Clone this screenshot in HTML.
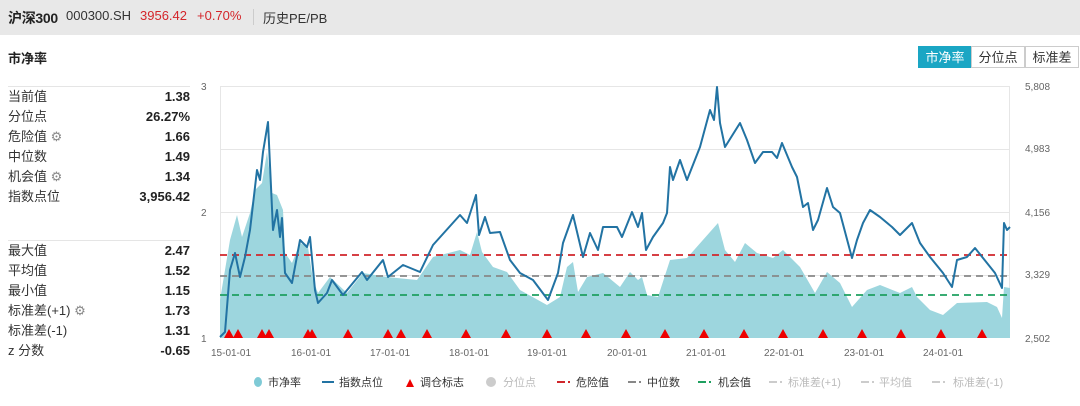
<!DOCTYPE html>
<html><head><meta charset="utf-8"><style>
body{margin:0;width:1080px;height:406px;background:#fff;font-family:"Liberation Sans","Noto Sans CJK SC",sans-serif;overflow:hidden;position:relative}
.hdr{position:absolute;left:0;top:0;width:1080px;height:35px;background:#e8e8e8}
.t{position:absolute;white-space:nowrap}
.row{position:absolute;left:8px;width:182px;height:20px;font-size:13px;color:#333;line-height:20px}
.row b{position:absolute;right:0;top:0;font-weight:bold;color:#222}
.sep{position:absolute;left:8px;width:182px;height:1px;background:#e5e5e5}
.btn{position:absolute;top:46px;height:22px;line-height:22px;font-size:13px;text-align:center;border:1px solid #ccc;box-sizing:border-box;color:#333;background:#fff}
</style></head><body>
<div class="hdr"></div>
<div class="t" style="left:8px;top:8px;font-size:14px;font-weight:bold;color:#222;letter-spacing:-0.3px">沪深300</div>
<div class="t" style="left:66px;top:8px;font-size:13px;color:#333">000300.SH</div>
<div class="t" style="left:140px;top:8px;font-size:13px;color:#d4262b">3956.42</div>
<div class="t" style="left:197px;top:8px;font-size:13px;color:#d4262b">+0.70%</div>
<div style="position:absolute;left:253px;top:9px;width:1px;height:16px;background:#ccc"></div>
<div class="t" style="left:263px;top:8px;font-size:13px;color:#333">历史PE/PB</div>
<div class="t" style="left:8px;top:48px;font-size:13px;font-weight:bold;color:#222">市净率</div>
<div class="btn" style="left:918px;width:54px;background:#1aa6c4;border-color:#1aa6c4;color:#fff">市净率</div>
<div class="btn" style="left:971px;width:54px">分位点</div>
<div class="btn" style="left:1025px;width:54px">标准差</div>

<div class="sep" style="top:86px"></div>
<div class="row" style="top:87px">当前值<b>1.38</b></div>
<div class="row" style="top:107px">分位点<b>26.27%</b></div>
<div class="row" style="top:127px">危险值 <span style="color:#888">⚙</span><b>1.66</b></div>
<div class="row" style="top:147px">中位数<b>1.49</b></div>
<div class="row" style="top:167px">机会值 <span style="color:#888">⚙</span><b>1.34</b></div>
<div class="row" style="top:187px">指数点位<b>3,956.42</b></div>
<div class="sep" style="top:240px"></div>
<div class="row" style="top:241px">最大值<b>2.47</b></div>
<div class="row" style="top:261px">平均值<b>1.52</b></div>
<div class="row" style="top:281px">最小值<b>1.15</b></div>
<div class="row" style="top:301px">标准差(+1) <span style="color:#888">⚙</span><b>1.73</b></div>
<div class="row" style="top:321px">标准差(-1)<b>1.31</b></div>
<div class="row" style="top:341px">z 分数<b>-0.65</b></div>

<svg width="1080" height="406" style="position:absolute;left:0;top:0" font-family="Liberation Sans,Noto Sans CJK SC,sans-serif">
<g stroke="#e6e6e6" stroke-width="1">
<line x1="220" y1="86.5" x2="1010" y2="86.5"/><line x1="220" y1="149.5" x2="1010" y2="149.5"/>
<line x1="220" y1="212.5" x2="1010" y2="212.5"/><line x1="220" y1="275.5" x2="1010" y2="275.5"/>
<line x1="220.5" y1="86" x2="220.5" y2="338"/><line x1="1009.5" y1="86" x2="1009.5" y2="338"/>
</g>
<g font-size="10" fill="#666">
<text x="201" y="90">3</text><text x="201" y="216">2</text><text x="201" y="342">1</text>
<text x="1025" y="90">5,808</text><text x="1025" y="152">4,983</text><text x="1025" y="216">4,156</text><text x="1025" y="278">3,329</text><text x="1025" y="342">2,502</text>
</g>
<polygon fill="#9dd6de" points="220,338 220,300 230,240 237,215 242,237 250,213 255,190 262,183 267,152 272,193 277,195 283,210 285,253 292,263 300,243 308,247 313,280 318,293 330,277 347,293 363,273 387,277 417,280 433,257 460,250 470,255 477,232 482,252 493,267 507,272 520,290 547,305 560,297 567,267 573,262 578,292 587,277 603,273 620,287 630,272 638,280 642,277 647,295 658,297 670,260 687,258 710,232 718,223 725,250 735,262 745,243 757,253 773,258 783,250 800,267 815,293 827,272 840,283 852,307 867,290 880,285 900,293 912,287 917,297 930,310 943,315 957,303 987,302 997,307 1002,318 1004,287 1010,288 1010,338"/>
<g stroke-width="1.8" stroke-dasharray="7,5" fill="none">
<line x1="220" y1="255" x2="1010" y2="255" stroke="#d0262b"/>
<line x1="220" y1="276" x2="1010" y2="276" stroke="#888"/>
<line x1="220" y1="295" x2="1010" y2="295" stroke="#1fa060"/>
</g>
<polyline fill="none" stroke="#2273a3" stroke-width="2" stroke-linejoin="round" points="220,337 225,332 230,270 235,253 240,277 245,257 250,230 257,170 260,180 263,152 268,122 273,230 277,210 280,237 282,218 285,273 292,283 300,240 307,247 310,237 315,290 318,303 327,293 332,280 343,295 362,272 367,280 383,260 388,277 403,265 420,272 433,245 460,215 467,223 476,195 479,235 485,217 490,233 500,232 510,260 520,273 533,280 548,300 558,273 563,243 573,215 583,257 590,233 598,250 603,227 617,227 622,237 632,212 638,227 642,213 646,250 653,237 663,223 667,213 670,167 673,180 680,160 687,180 700,147 710,110 714,120 717,87 720,123 725,147 740,123 747,140 755,163 763,152 772,152 777,158 782,143 792,167 797,177 803,207 808,203 813,230 818,220 827,188 833,207 840,213 852,258 857,240 863,223 870,210 880,217 892,227 900,235 912,223 920,243 930,257 943,273 952,287 957,260 967,257 975,248 987,263 995,273 1002,288 1004,223 1007,230 1010,227"/>
<g fill="#ee0000">
<path d="M224,338l5,-9l5,9z M233,338l5,-9l5,9z M257,338l5,-9l5,9z M264,338l5,-9l5,9z M303,338l5,-9l5,9z M307,338l5,-9l5,9z M343,338l5,-9l5,9z M383,338l5,-9l5,9z M396,338l5,-9l5,9z M422,338l5,-9l5,9z M461,338l5,-9l5,9z M501,338l5,-9l5,9z M542,338l5,-9l5,9z M581,338l5,-9l5,9z M621,338l5,-9l5,9z M660,338l5,-9l5,9z M699,338l5,-9l5,9z M739,338l5,-9l5,9z M778,338l5,-9l5,9z M818,338l5,-9l5,9z M857,338l5,-9l5,9z M896,338l5,-9l5,9z M936,338l5,-9l5,9z M977,338l5,-9l5,9z"/>
</g>
<g font-size="10" fill="#666" text-anchor="middle">
<text x="231" y="356">15-01-01</text><text x="311" y="356">16-01-01</text><text x="390" y="356">17-01-01</text><text x="469" y="356">18-01-01</text><text x="547" y="356">19-01-01</text><text x="627" y="356">20-01-01</text><text x="706" y="356">21-01-01</text><text x="784" y="356">22-01-01</text><text x="864" y="356">23-01-01</text><text x="943" y="356">24-01-01</text>
</g>
<g font-size="11">
<ellipse cx="258" cy="382" rx="4" ry="5" fill="#7fcad6"/><text x="268" y="386" fill="#333">市净率</text>
<line x1="322" y1="382" x2="334" y2="382" stroke="#2273a3" stroke-width="2"/><text x="339" y="386" fill="#333">指数点位</text>
<path d="M406,387l4,-8l4,8z" fill="#ee0000"/><text x="420" y="386" fill="#333">调仓标志</text>
<circle cx="491" cy="382" r="5" fill="#ccc"/><text x="503" y="386" fill="#bbb">分位点</text>
<path d="M557,382h8M568,382h2" stroke="#d0262b" stroke-width="2"/><text x="576" y="386" fill="#333">危险值</text>
<path d="M628,382h8M639,382h2" stroke="#888" stroke-width="2"/><text x="647" y="386" fill="#333">中位数</text>
<path d="M698,382h8M709,382h2" stroke="#1fa060" stroke-width="2"/><text x="718" y="386" fill="#333">机会值</text>
<path d="M769,382h8M780,382h2" stroke="#ccc" stroke-width="2"/><text x="788" y="386" fill="#bbb">标准差(+1)</text>
<path d="M861,382h8M872,382h2" stroke="#ccc" stroke-width="2"/><text x="879" y="386" fill="#bbb">平均值</text>
<path d="M932,382h8M943,382h2" stroke="#ccc" stroke-width="2"/><text x="953" y="386" fill="#bbb">标准差(-1)</text>
</g>
</svg>
</body></html>
